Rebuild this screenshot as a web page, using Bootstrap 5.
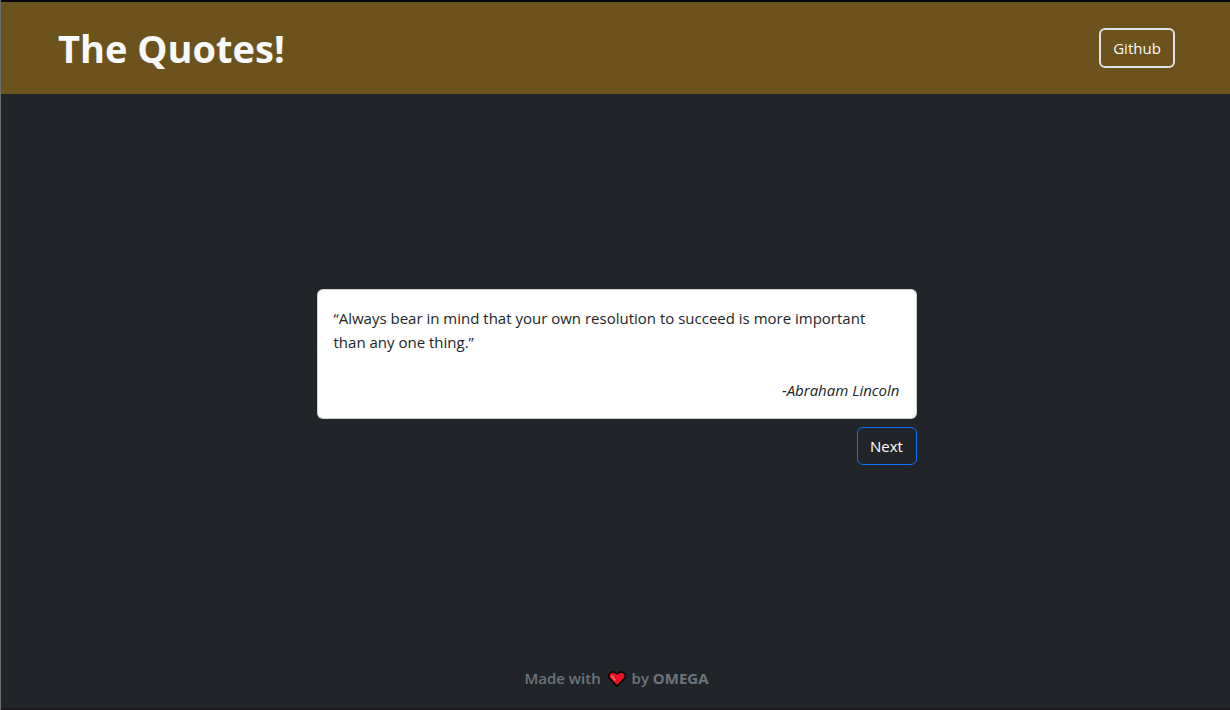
<!DOCTYPE html>
<html lang="en">
<head>
<meta charset="utf-8">
<meta name="viewport" content="width=device-width, initial-scale=1">
<title>The Quotes!</title>
<link href="https://cdn.jsdelivr.net/npm/bootstrap@5.3.0/dist/css/bootstrap.min.css" rel="stylesheet">
<style>
  body { font-family: "Open Sans", "Noto Sans", sans-serif; border-left: 1px solid #6b6e70; }
  .site-header { background: #6c531e; border-top: 2px solid #08070c; padding: 22px 55px 22px 57px; }
  .site-title { font-size: 38px; line-height: 48px; }
  .github-link { --bs-btn-border-width: 2px; --bs-btn-border-color: #dee2e6; --bs-btn-padding-x: 11px; font-size: 15px; line-height: 24px; min-width: 76px; }
  main { padding-left: 2px; }
  .quote-box { max-width: 600px; }
  .quote-text { font-size: 15px; line-height: 24px; }
  .next-btn { --bs-btn-color: #fff; font-size: 15px; line-height: 24px; min-width: 60px; }
  .site-footer { font-size: 15px; line-height: 24px; color: #6c757d; padding: 6px 0 18px 2px; border-bottom: 2px solid #1e1a20; }
  .heart { margin: 0 2px 2px 3px; }
</style>
</head>
<body class="bg-dark min-vh-100 d-flex flex-column">
<header class="site-header d-flex justify-content-between align-items-center">
  <h1 class="site-title fw-bold text-light mb-0">The Quotes!</h1>
  <a class="btn btn-outline-light github-link" href="#">Github</a>
</header>
<main class="flex-grow-1 d-flex flex-column align-items-center justify-content-center">
  <div class="quote-box w-100">
    <div class="card mb-2">
      <div class="card-body quote-text">
        <p class="mb-4">“Always bear in mind that your own resolution to succeed is more important than any one thing.”</p>
        <p class="mb-0 text-end fst-italic">-Abraham Lincoln</p>
      </div>
    </div>
    <div class="text-end"><button type="button" class="btn btn-outline-primary next-btn">Next</button></div>
  </div>
</main>
<footer class="site-footer text-center fw-semibold">
  Made with
  <svg width="18" height="16" viewBox="0 0 18 16" class="heart" role="img" aria-label="love"><path d="M9 15 1.500 7.500C-.5 3.500 2 1 5 1c2 0 3 .8 4 2 1-1.200 2-2 4-2 3 0 5.500 2.500 3.500 6.500Z" fill="#e81224" stroke="#000" stroke-width="1.500" stroke-linejoin="round"/><path d="m4 5 3 4" stroke="#f4795e" stroke-width="1.500" stroke-linecap="round"/></svg>
  by <span class="fw-bold">OMEGA</span>
</footer>
<script src="https://cdn.jsdelivr.net/npm/bootstrap@5.3.0/dist/js/bootstrap.bundle.min.js"></script>
</body>
</html>
